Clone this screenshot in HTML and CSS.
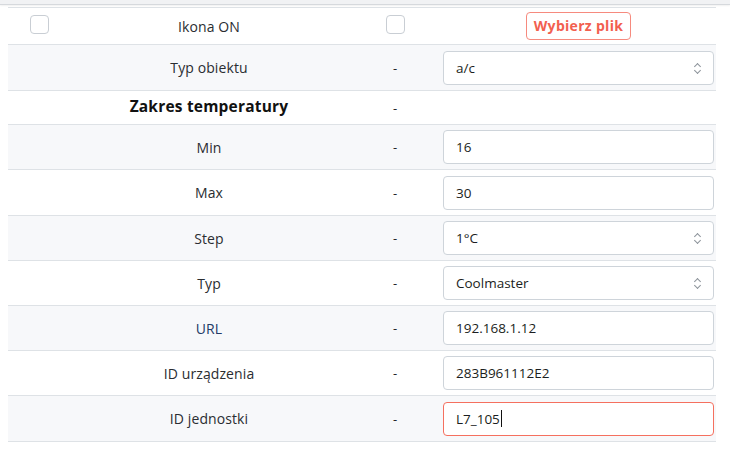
FILE: index.html
```html
<!DOCTYPE html>
<html lang="pl">
<head>
  <meta charset="UTF-8">
  <meta name="viewport" content="width=device-width, initial-scale=1.0">
  <title>Obiekt</title>
  <link rel="stylesheet" href="styles.css">
</head>
<body>
  <div class="topbar"></div>

  <table class="props">
    <colgroup>
      <col class="props__col-check">
      <col class="props__col-label">
      <col class="props__col-dash">
      <col class="props__col-value">
    </colgroup>
    <tr class="props__row props__row--first">
      <td class="props__check"><span class="checkbox"></span></td>
      <td class="props__label">Ikona ON</td>
      <td class="props__dash"><span class="checkbox"></span></td>
      <td class="props__value props__value--center">
        <button class="file-btn" type="button">Wybierz plik</button>
      </td>
    </tr>
    <tr class="props__row props__row--tall">
      <td class="props__check"></td>
      <td class="props__label">Typ obiektu</td>
      <td class="props__dash">-</td>
      <td class="props__value"><div class="field field--select">a/c<span class="field__arrows"></span></div></td>
    </tr>
    <tr class="props__row props__row--section">
      <td class="props__check"></td>
      <td class="props__label props__label--section">Zakres temperatury</td>
      <td class="props__dash">-</td>
      <td class="props__value"></td>
    </tr>
    <tr class="props__row">
      <td class="props__check"></td>
      <td class="props__label">Min</td>
      <td class="props__dash">-</td>
      <td class="props__value"><div class="field">16</div></td>
    </tr>
    <tr class="props__row props__row--tall">
      <td class="props__check"></td>
      <td class="props__label">Max</td>
      <td class="props__dash">-</td>
      <td class="props__value"><div class="field">30</div></td>
    </tr>
    <tr class="props__row">
      <td class="props__check"></td>
      <td class="props__label">Step</td>
      <td class="props__dash">-</td>
      <td class="props__value"><div class="field field--select">1°C<span class="field__arrows"></span></div></td>
    </tr>
    <tr class="props__row">
      <td class="props__check"></td>
      <td class="props__label">Typ</td>
      <td class="props__dash">-</td>
      <td class="props__value"><div class="field field--select">Coolmaster<span class="field__arrows"></span></div></td>
    </tr>
    <tr class="props__row">
      <td class="props__check"></td>
      <td class="props__label props__label--link">URL</td>
      <td class="props__dash">-</td>
      <td class="props__value"><div class="field">192.168.1.12</div></td>
    </tr>
    <tr class="props__row">
      <td class="props__check"></td>
      <td class="props__label">ID urządzenia</td>
      <td class="props__dash">-</td>
      <td class="props__value"><div class="field">283B961112E2</div></td>
    </tr>
    <tr class="props__row props__row--tall">
      <td class="props__check"></td>
      <td class="props__label">ID jednostki</td>
      <td class="props__dash">-</td>
      <td class="props__value"><div class="field field--focus">L7_105<span class="field__caret"></span></div></td>
    </tr>
  </table>
</body>
</html>
```

FILE: styles.css
```css
:root {
  --line: #dee2e6;
  --stripe: #f7f8fa;
  --text: #212529;
  --accent: #f2604f;
}

* {
  box-sizing: border-box;
}

html, body {
  margin: 0;
  padding: 0;
  background: white;
  font-family: 'Open Sans', 'DejaVu Sans', sans-serif;
  color: var(--text);
}

.topbar {
  height: 5px;
  background: #f1f2f4;
  border-bottom: 1px solid #d6d9dd;
  box-shadow: 0 1px 2px rgba(0, 0, 0, 0.06);
}

.props {
  width: 708px;
  margin: 2px 0 0 8px;
  border-collapse: collapse;
  table-layout: fixed;
  border-top: 1px solid var(--line);
  font-size: 14px;
}

.props__col-check { width: 53px; }
.props__col-label { width: 296px; }
.props__col-dash { width: 76px; }
.props__col-value { width: 283px; }

.props__row {
  height: 45px;
  border-bottom: 1px solid var(--line);
}

.props__row:nth-child(even) {
  background: var(--stripe);
}

.props__row--first { height: 37px; }
.props__row--tall { height: 46px; }
.props__row--section { height: 34px; }

.props td {
  padding: 0;
  vertical-align: middle;
}

.props__check {
  padding-left: 22px !important;
}

.props__label {
  text-align: center;
  letter-spacing: 0.1px;
  color: #2a2d31;
}

.props__label--section {
  font-size: 15.5px;
  font-weight: bold;
  color: #111;
  padding-bottom: 3px !important;
  letter-spacing: 0.2px;
}

.props__label--link {
  color: #243a66;
}

.props__dash {
  text-align: center;
  font-size: 13px;
}

.props__value {
  padding: 0 2px 0 10px !important;
}

.props__value--center {
  text-align: center;
}

.checkbox {
  display: inline-block;
  width: 19px;
  height: 19px;
  border: 1px solid #c9ced4;
  border-radius: 4px;
  background: white;
  vertical-align: middle;
  margin-top: -7px;
}

.file-btn {
  font-family: inherit;
  font-size: 14px;
  font-weight: bold;
  letter-spacing: 0.3px;
  color: var(--accent);
  background: white;
  border: 1px solid #f68a7e;
  border-radius: 4px;
  padding: 3px 7px 4px;
  margin-top: -1px;
  cursor: pointer;
}

.field {
  position: relative;
  display: flex;
  align-items: center;
  height: 34px;
  padding: 0 12px;
  border: 1px solid #ced4da;
  border-radius: 4px;
  background: white;
  font-size: 13.5px;
  color: #1b1e21;
}

.field--focus {
  border-color: #f5705f;
}

.field__caret {
  display: inline-block;
  width: 1px;
  height: 17px;
  background: #111;
  margin-left: 1px;
}

.field__arrows {
  position: absolute;
  right: 12px;
  top: 50%;
  width: 7px;
  height: 11px;
  margin-top: -5px;
}

.field__arrows::before,
.field__arrows::after {
  content: '';
  position: absolute;
  left: 1px;
  width: 4px;
  height: 4px;
  border-color: #8c939a;
  border-style: solid;
  border-width: 1px 0 0 1px;
}

.field__arrows::before {
  top: 1px;
  transform: rotate(45deg);
}

.field__arrows::after {
  bottom: 1px;
  transform: rotate(225deg);
}
```
